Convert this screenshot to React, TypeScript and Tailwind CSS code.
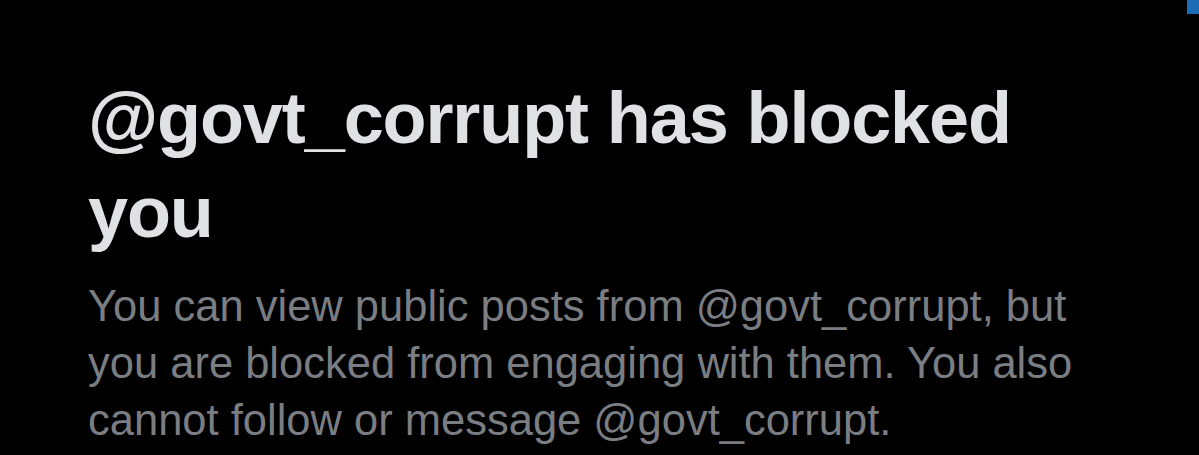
import React from "react";

export default function App() {
  return (
    <div className="relative h-[455px] w-full overflow-hidden bg-black">
      <div className="absolute right-0 top-0 h-[14px] w-[12px] bg-[#1c6cb4]" />
      <div className="pl-[88px] pr-[60px] pt-[71px]" style={{ fontFamily: '"Liberation Sans", Arial, sans-serif' }}>
        <h1 className="text-[72px] font-bold leading-[94px] tracking-[-1.1px] text-[#e0e1e2]">
          @govt_corrupt has blocked you
        </h1>
        <p className="mt-[19px] w-[1010px] text-[43.5px] leading-[57px] text-[#7a7e83]">
          You can view public posts from @govt_corrupt, but you are blocked from engaging with them. You also cannot follow or message @govt_corrupt.
        </p>
      </div>
    </div>
  );
}
